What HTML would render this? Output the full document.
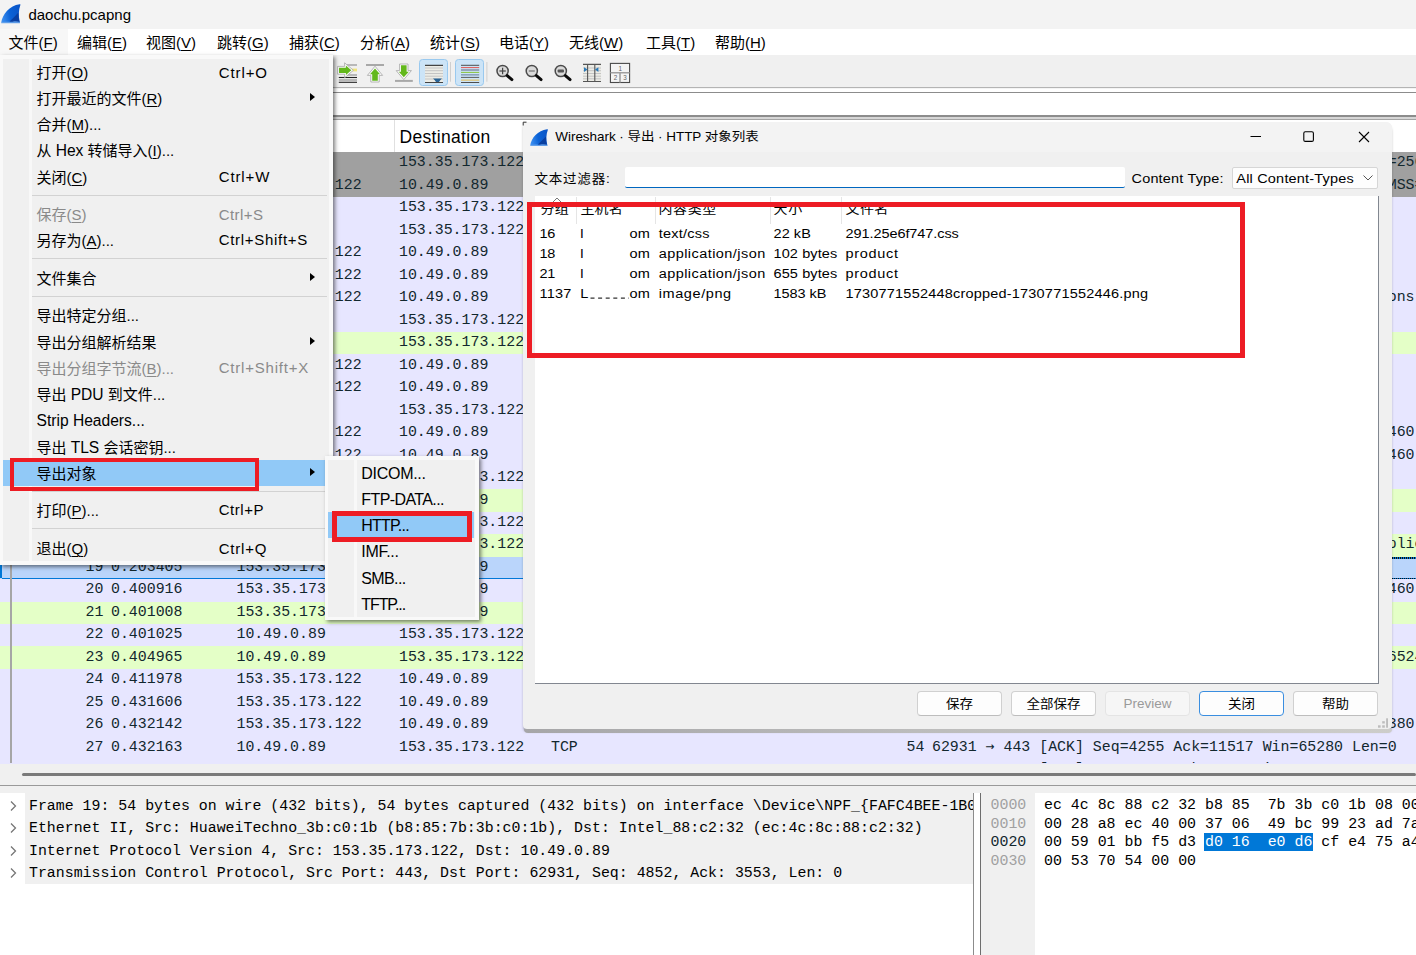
<!DOCTYPE html><html lang="zh-CN"><head><meta charset="utf-8"><title>daochu.pcapng</title><style>
*{box-sizing:border-box}
html,body{margin:0;padding:0}
body{width:1416px;height:955px;position:relative;overflow:hidden;background:#fff;font-family:"Liberation Sans","Noto Sans CJK SC",sans-serif;color:#000}
div,span,svg{position:absolute}
.t{white-space:pre;line-height:20px;height:20px}
.m{font-family:"Liberation Mono","Noto Sans CJK SC",monospace;font-size:14.900px;color:#12272e;white-space:pre;line-height:20px;height:20px}
.u{text-decoration:underline;position:static;text-underline-offset:2px}
u{text-underline-offset:2px;text-decoration-thickness:1px}
.mi{font-size:15px;left:36.5px}
.sc{font-size:16px;left:218.5px;letter-spacing:.4px}
.l{position:static;font-size:15.6px}
.ar{position:static;font-family:"DejaVu Sans Mono",monospace;font-size:14.85px;line-height:10px}
.bt{position:static;display:inline-block;transform:scaleY(.93)}
.dis{color:#8a8a8a}
.arr{width:0;height:0;border-left:5px solid #000;border-top:4.8px solid transparent;border-bottom:4.8px solid transparent}
.sep{height:1px;background:#d4d4d4}
.btn{border:1px solid #d0d0d0;border-bottom-color:#bdbdbd;border-radius:4px;background:#fdfdfd;height:25px;top:691px;font-size:13.5px;text-align:center;line-height:23px}
.red{border:5px solid #ed1c24}
</style></head><body>
<div style="left:0px;top:0px;width:1416px;height:29px;background:#f3f3f3;"></div>
<svg style="left:1px;top:4px" width="20" height="19.6" viewBox="0 0 20 20" preserveAspectRatio="none"><defs><linearGradient id="g1" x1="0" y1=".6" x2="1" y2=".4"><stop offset="0" stop-color="#3d8ff0"/><stop offset=".45" stop-color="#0b62d6"/><stop offset="1" stop-color="#0a55c8"/></linearGradient></defs><path d="M0.2 19.2C1.4 10.5 8.5 1.6 18.6 0.3C19.4 0.2 19.6 0.7 19.3 1.4C17.6 6 17.3 12 18.9 19.2Z" fill="url(#g1)"/><path d="M8.8 17.6C12 14.6 14.6 11.6 17.4 8.6C17.3 12 17.7 15.6 18.6 18.8L9 18.8Z" fill="#093a98" opacity=".85"/><path d="M0.2 19.2C4 17.2 8 18.8 11.5 18C14.5 17.3 17 17.8 18.9 18.4L18.9 19.7L0.2 19.7Z" fill="#5f9eea" opacity=".9"/></svg>
<span class="t" style="left:28.4px;top:4.50px;font-size:15px;">daochu.pcapng</span>
<div style="left:0px;top:29px;width:1416px;height:26px;background:#ffffff;"></div>
<div style="left:0px;top:29px;width:67.6px;height:26px;background:#f7f7f7;"></div>
<span class="t" style="left:8.5px;top:32.50px;font-size:15px;">文件(<u>F</u>)</span>
<span class="t" style="left:77px;top:32.50px;font-size:15px;">编辑(<u>E</u>)</span>
<span class="t" style="left:146px;top:32.50px;font-size:15px;">视图(<u>V</u>)</span>
<span class="t" style="left:217px;top:32.50px;font-size:15px;">跳转(<u>G</u>)</span>
<span class="t" style="left:289px;top:32.50px;font-size:15px;">捕获(<u>C</u>)</span>
<span class="t" style="left:360px;top:32.50px;font-size:15px;">分析(<u>A</u>)</span>
<span class="t" style="left:430px;top:32.50px;font-size:15px;">统计(<u>S</u>)</span>
<span class="t" style="left:499px;top:32.50px;font-size:15px;">电话(<u>Y</u>)</span>
<span class="t" style="left:569px;top:32.50px;font-size:15px;">无线(<u>W</u>)</span>
<span class="t" style="left:646px;top:32.50px;font-size:15px;">工具(<u>T</u>)</span>
<span class="t" style="left:715px;top:32.50px;font-size:15px;">帮助(<u>H</u>)</span>
<div style="left:0px;top:55px;width:1416px;height:33px;background:#f0f0f0;"></div>
<div style="left:0px;top:87px;width:1416px;height:1px;background:#b4b4b4;"></div>
<div style="left:0px;top:88px;width:1416px;height:1px;background:#f4f4f4;"></div>
<div style="left:0px;top:89px;width:1416px;height:3px;background:#ffffff;"></div>
<div style="left:0px;top:92px;width:1416px;height:1px;background:#8c8c8c;"></div>
<div style="left:0px;top:93px;width:1416px;height:22px;background:#ffffff;"></div>
<div style="left:0px;top:115px;width:1416px;height:2px;background:#8c8c8c;"></div>
<div style="left:0px;top:117px;width:1416px;height:1.5px;background:#d6d6d6;"></div>
<div style="left:0px;top:118.5px;width:1416px;height:1.2px;background:#a4a4a4;"></div>
<div style="left:0px;top:120px;width:1416px;height:32px;background:#ffffff;"></div>
<div style="left:394px;top:120px;width:1px;height:32px;background:#e0e0e0;"></div>
<span class="t" style="left:399.5px;top:126.50px;font-size:17.5px;letter-spacing:.32px;">Destination</span>
<div style="left:0;top:152px;width:1416px;height:612.2px;overflow:hidden;background:#e7e6ff">
<div style="left:0;top:-0.1px;width:1416px;height:23.080000000000002px;background:#a0a0a0">
<span class="m" style="left:94.56px;top:0.43px;">1</span>
<span class="m" style="left:236.50px;top:0.43px;">10.49.0.89</span>
<span class="m" style="left:399.00px;top:0.43px;">153.35.173.122</span>
<span class="m" style="left:551.00px;top:0.43px;">TCP</span>
<span class="m" style="left:906.62px;top:0.43px;">66</span>
<span class="m" style="left:932.00px;top:0.43px;">62931 <span class="ar">→</span> 443 [SYN] Seq=0 Win=64240 Len=0 MSS=1460 WS=256 SACK_PERM</span>
</div>
<div style="left:0;top:22.38px;width:1416px;height:23.080000000000002px;background:#a0a0a0">
<span class="m" style="left:94.56px;top:0.43px;">2</span>
<span class="m" style="left:236.50px;top:0.43px;">153.35.173.122</span>
<span class="m" style="left:399.00px;top:0.43px;">10.49.0.89</span>
<span class="m" style="left:551.00px;top:0.43px;">TCP</span>
<span class="m" style="left:906.62px;top:0.43px;">66</span>
<span class="m" style="left:932.00px;top:0.43px;">443 <span class="ar">→</span> 62931 [SYN, ACK] Seq=0 Ack=1 Win=64240 Len=0 MSS=1360 SACK_PERM WS=128</span>
</div>
<div style="left:0;top:44.86px;width:1416px;height:23.080000000000002px;background:#e7e6ff">
<span class="m" style="left:94.56px;top:0.43px;">3</span>
<span class="m" style="left:236.50px;top:0.43px;">10.49.0.89</span>
<span class="m" style="left:399.00px;top:0.43px;">153.35.173.122</span>
<span class="m" style="left:551.00px;top:0.43px;">TCP</span>
<span class="m" style="left:906.62px;top:0.43px;">54</span>
<span class="m" style="left:932.00px;top:0.43px;">62931 <span class="ar">→</span> 443 [ACK] Seq=1 Ack=1 Win=65280 Len=0</span>
</div>
<div style="left:0;top:67.34px;width:1416px;height:23.080000000000002px;background:#e7e6ff">
<span class="m" style="left:94.56px;top:0.43px;">4</span>
<span class="m" style="left:236.50px;top:0.43px;">10.49.0.89</span>
<span class="m" style="left:399.00px;top:0.43px;">153.35.173.122</span>
<span class="m" style="left:551.00px;top:0.43px;">TLSv1.3</span>
<span class="m" style="left:897.68px;top:0.43px;">571</span>
<span class="m" style="left:932.00px;top:0.43px;">Client Hello</span>
</div>
<div style="left:0;top:89.82000000000001px;width:1416px;height:23.080000000000002px;background:#e7e6ff">
<span class="m" style="left:94.56px;top:0.43px;">5</span>
<span class="m" style="left:236.50px;top:0.43px;">153.35.173.122</span>
<span class="m" style="left:399.00px;top:0.43px;">10.49.0.89</span>
<span class="m" style="left:551.00px;top:0.43px;">TCP</span>
<span class="m" style="left:906.62px;top:0.43px;">54</span>
<span class="m" style="left:932.00px;top:0.43px;">443 <span class="ar">→</span> 62931 [ACK] Seq=1 Ack=518 Win=64128 Len=0</span>
</div>
<div style="left:0;top:112.30000000000001px;width:1416px;height:23.080000000000002px;background:#e7e6ff">
<span class="m" style="left:94.56px;top:0.43px;">6</span>
<span class="m" style="left:236.50px;top:0.43px;">153.35.173.122</span>
<span class="m" style="left:399.00px;top:0.43px;">10.49.0.89</span>
<span class="m" style="left:551.00px;top:0.43px;">TLSv1.3</span>
<span class="m" style="left:888.74px;top:0.43px;">1414</span>
<span class="m" style="left:932.00px;top:0.43px;">Server Hello, Change Cipher Spec</span>
</div>
<div style="left:0;top:134.78px;width:1416px;height:23.080000000000002px;background:#e7e6ff">
<span class="m" style="left:94.56px;top:0.43px;">7</span>
<span class="m" style="left:236.50px;top:0.43px;">153.35.173.122</span>
<span class="m" style="left:399.00px;top:0.43px;">10.49.0.89</span>
<span class="m" style="left:551.00px;top:0.43px;">TLSv1.3</span>
<span class="m" style="left:888.74px;top:0.43px;">1414</span>
<span class="m" style="left:932.00px;top:0.43px;">Server Hello, Change Cipher Spec, Encrypted Extensions, Certificate</span>
</div>
<div style="left:0;top:157.26000000000002px;width:1416px;height:23.080000000000002px;background:#e7e6ff">
<span class="m" style="left:94.56px;top:0.43px;">8</span>
<span class="m" style="left:236.50px;top:0.43px;">10.49.0.89</span>
<span class="m" style="left:399.00px;top:0.43px;">153.35.173.122</span>
<span class="m" style="left:551.00px;top:0.43px;">TCP</span>
<span class="m" style="left:906.62px;top:0.43px;">54</span>
<span class="m" style="left:932.00px;top:0.43px;">62931 <span class="ar">→</span> 443 [ACK] Seq=518 Ack=2721 Win=65280 Len=0</span>
</div>
<div style="left:0;top:179.74px;width:1416px;height:23.080000000000002px;background:#e4ffc7">
<span class="m" style="left:94.56px;top:0.43px;">9</span>
<span class="m" style="left:236.50px;top:0.43px;">10.49.0.89</span>
<span class="m" style="left:399.00px;top:0.43px;">153.35.173.122</span>
<span class="m" style="left:551.00px;top:0.43px;">HTTP</span>
<span class="m" style="left:897.68px;top:0.43px;">571</span>
<span class="m" style="left:932.00px;top:0.43px;">GET /product HTTP/1.1</span>
</div>
<div style="left:0;top:202.22px;width:1416px;height:23.080000000000002px;background:#e7e6ff">
<span class="m" style="left:85.62px;top:0.43px;">10</span>
<span class="m" style="left:236.50px;top:0.43px;">153.35.173.122</span>
<span class="m" style="left:399.00px;top:0.43px;">10.49.0.89</span>
<span class="m" style="left:551.00px;top:0.43px;">TCP</span>
<span class="m" style="left:906.62px;top:0.43px;">54</span>
<span class="m" style="left:932.00px;top:0.43px;">443 <span class="ar">→</span> 62931 [ACK] Seq=2721 Ack=1035 Win=64128 Len=0</span>
</div>
<div style="left:0;top:224.70000000000002px;width:1416px;height:23.080000000000002px;background:#e7e6ff">
<span class="m" style="left:85.62px;top:0.43px;">11</span>
<span class="m" style="left:236.50px;top:0.43px;">153.35.173.122</span>
<span class="m" style="left:399.00px;top:0.43px;">10.49.0.89</span>
<span class="m" style="left:551.00px;top:0.43px;">TCP</span>
<span class="m" style="left:906.62px;top:0.43px;">54</span>
<span class="m" style="left:932.00px;top:0.43px;">443 <span class="ar">→</span> 62931 [ACK] Seq=2721 Ack=1552 Win=64128 Len=0</span>
</div>
<div style="left:0;top:247.18px;width:1416px;height:23.080000000000002px;background:#e7e6ff">
<span class="m" style="left:85.62px;top:0.43px;">12</span>
<span class="m" style="left:236.50px;top:0.43px;">10.49.0.89</span>
<span class="m" style="left:399.00px;top:0.43px;">153.35.173.122</span>
<span class="m" style="left:551.00px;top:0.43px;">TCP</span>
<span class="m" style="left:906.62px;top:0.43px;">54</span>
<span class="m" style="left:932.00px;top:0.43px;">62931 <span class="ar">→</span> 443 [ACK] Seq=1552 Ack=2721 Win=65280 Len=0</span>
</div>
<div style="left:0;top:269.65999999999997px;width:1416px;height:23.080000000000002px;background:#e7e6ff">
<span class="m" style="left:85.62px;top:0.43px;">13</span>
<span class="m" style="left:236.50px;top:0.43px;">153.35.173.122</span>
<span class="m" style="left:399.00px;top:0.43px;">10.49.0.89</span>
<span class="m" style="left:551.00px;top:0.43px;">TCP</span>
<span class="m" style="left:888.74px;top:0.43px;">1514</span>
<span class="m" style="left:932.00px;top:0.43px;">443 <span class="ar">→</span> 62931 [ACK] Seq=2721 Ack=1552 Win=64128 Len=1460</span>
</div>
<div style="left:0;top:292.14px;width:1416px;height:23.080000000000002px;background:#e7e6ff">
<span class="m" style="left:85.62px;top:0.43px;">14</span>
<span class="m" style="left:236.50px;top:0.43px;">153.35.173.122</span>
<span class="m" style="left:399.00px;top:0.43px;">10.49.0.89</span>
<span class="m" style="left:551.00px;top:0.43px;">TCP</span>
<span class="m" style="left:888.74px;top:0.43px;">1514</span>
<span class="m" style="left:932.00px;top:0.43px;">443 <span class="ar">→</span> 62931 [ACK] Seq=4181 Ack=1552 Win=64128 Len=1460</span>
</div>
<div style="left:0;top:314.62px;width:1416px;height:23.080000000000002px;background:#e7e6ff">
<span class="m" style="left:85.62px;top:0.43px;">15</span>
<span class="m" style="left:236.50px;top:0.43px;">10.49.0.89</span>
<span class="m" style="left:399.00px;top:0.43px;">153.35.173.122</span>
<span class="m" style="left:551.00px;top:0.43px;">TCP</span>
<span class="m" style="left:906.62px;top:0.43px;">54</span>
<span class="m" style="left:932.00px;top:0.43px;">62931 <span class="ar">→</span> 443 [ACK] Seq=1552 Ack=5641 Win=65280 Len=0</span>
</div>
<div style="left:0;top:337.09999999999997px;width:1416px;height:23.080000000000002px;background:#e4ffc7">
<span class="m" style="left:85.62px;top:0.43px;">16</span>
<span class="m" style="left:236.50px;top:0.43px;">153.35.173.122</span>
<span class="m" style="left:399.00px;top:0.43px;">10.49.0.89</span>
<span class="m" style="left:551.00px;top:0.43px;">HTTP</span>
<span class="m" style="left:897.68px;top:0.43px;">156</span>
<span class="m" style="left:932.00px;top:0.43px;">HTTP/1.1 200 OK  (text/css)</span>
</div>
<div style="left:0;top:359.58px;width:1416px;height:23.080000000000002px;background:#e7e6ff">
<span class="m" style="left:85.62px;top:0.43px;">17</span>
<span class="m" style="left:236.50px;top:0.43px;">10.49.0.89</span>
<span class="m" style="left:399.00px;top:0.43px;">153.35.173.122</span>
<span class="m" style="left:551.00px;top:0.43px;">TCP</span>
<span class="m" style="left:906.62px;top:0.43px;">54</span>
<span class="m" style="left:932.00px;top:0.43px;">62931 <span class="ar">→</span> 443 [ACK] Seq=1552 Ack=5743 Win=65280 Len=0</span>
</div>
<div style="left:0;top:382.06px;width:1416px;height:23.080000000000002px;background:#e4ffc7">
<span class="m" style="left:85.62px;top:0.43px;">18</span>
<span class="m" style="left:236.50px;top:0.43px;">10.49.0.89</span>
<span class="m" style="left:399.00px;top:0.43px;">153.35.173.122</span>
<span class="m" style="left:551.00px;top:0.43px;">HTTP</span>
<span class="m" style="left:897.68px;top:0.43px;">571</span>
<span class="m" style="left:932.00px;top:0.43px;">POST /product HTTP/1.1  (application/json) Applicatplication Data</span>
</div>
<div style="left:0;top:404.53999999999996px;width:1416px;height:23.080000000000002px;background:#bad5fb">
<span class="m" style="left:85.62px;top:0.43px;">19</span>
<span class="m" style="left:111.00px;top:0.43px;">0.203405</span>
<span class="m" style="left:236.50px;top:0.43px;">153.35.173.122</span>
<span class="m" style="left:399.00px;top:0.43px;">10.49.0.89</span>
<span class="m" style="left:551.00px;top:0.43px;">TCP</span>
<span class="m" style="left:906.62px;top:0.43px;">54</span>
<span class="m" style="left:932.00px;top:0.43px;">443 <span class="ar">→</span> 62931 [ACK] Seq=4852 Ack=3553 Win=64128 Len=0</span>
</div>
<div style="left:0;top:427.02px;width:1416px;height:23.080000000000002px;background:#e7e6ff">
<span class="m" style="left:85.62px;top:0.43px;">20</span>
<span class="m" style="left:111.00px;top:0.43px;">0.400916</span>
<span class="m" style="left:236.50px;top:0.43px;">153.35.173.122</span>
<span class="m" style="left:399.00px;top:0.43px;">10.49.0.89</span>
<span class="m" style="left:551.00px;top:0.43px;">TCP</span>
<span class="m" style="left:888.74px;top:0.43px;">1514</span>
<span class="m" style="left:932.00px;top:0.43px;">443 <span class="ar">→</span> 62931 [ACK] Seq=4852 Ack=3553 Win=64128 Len=1460</span>
</div>
<div style="left:0;top:449.5px;width:1416px;height:23.080000000000002px;background:#e4ffc7">
<span class="m" style="left:85.62px;top:0.43px;">21</span>
<span class="m" style="left:111.00px;top:0.43px;">0.401008</span>
<span class="m" style="left:236.50px;top:0.43px;">153.35.173.122</span>
<span class="m" style="left:399.00px;top:0.43px;">10.49.0.89</span>
<span class="m" style="left:551.00px;top:0.43px;">HTTP</span>
<span class="m" style="left:897.68px;top:0.43px;">709</span>
<span class="m" style="left:932.00px;top:0.43px;">HTTP/1.1 200 OK  (application/json)</span>
</div>
<div style="left:0;top:471.97999999999996px;width:1416px;height:23.080000000000002px;background:#e7e6ff">
<span class="m" style="left:85.62px;top:0.43px;">22</span>
<span class="m" style="left:111.00px;top:0.43px;">0.401025</span>
<span class="m" style="left:236.50px;top:0.43px;">10.49.0.89</span>
<span class="m" style="left:399.00px;top:0.43px;">153.35.173.122</span>
<span class="m" style="left:551.00px;top:0.43px;">TCP</span>
<span class="m" style="left:906.62px;top:0.43px;">54</span>
<span class="m" style="left:932.00px;top:0.43px;">62931 <span class="ar">→</span> 443 [ACK] Seq=3553 Ack=6967 Win=65280 Len=0</span>
</div>
<div style="left:0;top:494.46px;width:1416px;height:23.080000000000002px;background:#e4ffc7">
<span class="m" style="left:85.62px;top:0.43px;">23</span>
<span class="m" style="left:111.00px;top:0.43px;">0.404965</span>
<span class="m" style="left:236.50px;top:0.43px;">10.49.0.89</span>
<span class="m" style="left:399.00px;top:0.43px;">153.35.173.122</span>
<span class="m" style="left:551.00px;top:0.43px;">HTTP</span>
<span class="m" style="left:897.68px;top:0.43px;">702</span>
<span class="m" style="left:932.00px;top:0.43px;">POST /product HTTP/1.1  (application/json) Len=65246524</span>
</div>
<div style="left:0;top:516.9399999999999px;width:1416px;height:23.080000000000002px;background:#e7e6ff">
<span class="m" style="left:85.62px;top:0.43px;">24</span>
<span class="m" style="left:111.00px;top:0.43px;">0.411978</span>
<span class="m" style="left:236.50px;top:0.43px;">153.35.173.122</span>
<span class="m" style="left:399.00px;top:0.43px;">10.49.0.89</span>
<span class="m" style="left:551.00px;top:0.43px;">TCP</span>
<span class="m" style="left:906.62px;top:0.43px;">54</span>
<span class="m" style="left:932.00px;top:0.43px;">443 <span class="ar">→</span> 62931 [ACK] Seq=6967 Ack=4201 Win=64128 Len=0</span>
</div>
<div style="left:0;top:539.42px;width:1416px;height:23.080000000000002px;background:#e7e6ff">
<span class="m" style="left:85.62px;top:0.43px;">25</span>
<span class="m" style="left:111.00px;top:0.43px;">0.431606</span>
<span class="m" style="left:236.50px;top:0.43px;">153.35.173.122</span>
<span class="m" style="left:399.00px;top:0.43px;">10.49.0.89</span>
<span class="m" style="left:551.00px;top:0.43px;">TCP</span>
<span class="m" style="left:906.62px;top:0.43px;">54</span>
<span class="m" style="left:932.00px;top:0.43px;">443 <span class="ar">→</span> 62931 [ACK] Seq=6967 Ack=4255 Win=64128 Len=0</span>
</div>
<div style="left:0;top:561.9px;width:1416px;height:23.080000000000002px;background:#e7e6ff">
<span class="m" style="left:85.62px;top:0.43px;">26</span>
<span class="m" style="left:111.00px;top:0.43px;">0.432142</span>
<span class="m" style="left:236.50px;top:0.43px;">153.35.173.122</span>
<span class="m" style="left:399.00px;top:0.43px;">10.49.0.89</span>
<span class="m" style="left:551.00px;top:0.43px;">TCP</span>
<span class="m" style="left:888.74px;top:0.43px;">1434</span>
<span class="m" style="left:932.00px;top:0.43px;">443 <span class="ar">→</span> 62931 [ACK] Seq=6967 Ack=4255 Win=64128 Len=1380</span>
</div>
<div style="left:0;top:584.38px;width:1416px;height:23.080000000000002px;background:#e7e6ff">
<span class="m" style="left:85.62px;top:0.43px;">27</span>
<span class="m" style="left:111.00px;top:0.43px;">0.432163</span>
<span class="m" style="left:236.50px;top:0.43px;">10.49.0.89</span>
<span class="m" style="left:399.00px;top:0.43px;">153.35.173.122</span>
<span class="m" style="left:551.00px;top:0.43px;">TCP</span>
<span class="m" style="left:906.62px;top:0.43px;">54</span>
<span class="m" style="left:932.00px;top:0.43px;">62931 <span class="ar">→</span> 443 [ACK] Seq=4255 Ack=11517 Win=65280 Len=0</span>
</div>
<div style="left:0;top:606.86px;width:1416px;height:23.080000000000002px;background:#e7e6ff">
<span class="m" style="left:85.62px;top:0.43px;">28</span>
<span class="m" style="left:111.00px;top:0.43px;">0.432410</span>
<span class="m" style="left:236.50px;top:0.43px;">153.35.173.122</span>
<span class="m" style="left:399.00px;top:0.43px;">10.49.0.89</span>
<span class="m" style="left:551.00px;top:0.43px;">TCP</span>
<span class="m" style="left:888.74px;top:0.43px;">1434</span>
<span class="m" style="left:932.00px;top:0.43px;">443 <span class="ar">→</span> 62931 [ACK] Seq=8347 Ack=4255 Win=64128 Len=1380</span>
</div>
<div style="left:1392px;top:405.4px;width:24px;height:1.2px;background:#0078d7"></div>
<div style="left:2px;top:425.79999999999995px;width:1414px;height:1.3px;background:#0078d7"></div>
<div style="left:1392px;top:405.4px;width:24px;height:1.2px;background:repeating-linear-gradient(90deg,#111 0 1px,transparent 1px 2px)"></div>
<div style="left:1392px;top:425.79999999999995px;width:24px;height:1.3px;background:repeating-linear-gradient(90deg,#111 0 1px,transparent 1px 2px)"></div>
<div style="left:0;top:405px;width:2px;height:20.8px;background:#0078d7"></div>
<div style="left:10px;top:0;width:2px;height:612px;background:#a6a6a6"></div>
</div>
<div style="left:0px;top:763.3px;width:1416px;height:1px;background:#e7e6ff;"></div>
<div style="left:0px;top:764px;width:1416px;height:29px;background:#f0f0f0;"></div>
<div style="left:22px;top:773px;width:1394px;height:3px;background:#7a7a7a;border-radius:1.5px;"></div>
<div style="left:0px;top:785px;width:1416px;height:1px;background:#9a9a9a;"></div>
<div style="left:0px;top:793px;width:973px;height:162px;background:#ffffff;"></div>
<div style="left:25px;top:793px;width:948px;height:91px;background:#f0f0f0;"></div>
<div style="left:0;top:793px;width:973px;height:162px;overflow:hidden">
<svg style="left:9px;top:6.800000000000001px" width="9" height="12" viewBox="0 0 9 12"><path d="M2 1.5 L6.5 6 L2 10.5" fill="none" stroke="#757575" stroke-width="1.25"/></svg>
<span class="m" style="left:29px;top:2.8000000000000007px;color:#000">Frame 19: 54 bytes on wire (432 bits), 54 bytes captured (432 bits) on interface \Device\NPF_{FAFC4BEE-1B08-4A5C-9F0E-2F0D6B7A9A51}, id 0</span>
<svg style="left:9px;top:29.299999999999997px" width="9" height="12" viewBox="0 0 9 12"><path d="M2 1.5 L6.5 6 L2 10.5" fill="none" stroke="#757575" stroke-width="1.25"/></svg>
<span class="m" style="left:29px;top:25.299999999999997px;color:#000">Ethernet II, Src: HuaweiTechno_3b:c0:1b (b8:85:7b:3b:c0:1b), Dst: Intel_88:c2:32 (ec:4c:8c:88:c2:32)</span>
<svg style="left:9px;top:51.8px" width="9" height="12" viewBox="0 0 9 12"><path d="M2 1.5 L6.5 6 L2 10.5" fill="none" stroke="#757575" stroke-width="1.25"/></svg>
<span class="m" style="left:29px;top:47.8px;color:#000">Internet Protocol Version 4, Src: 153.35.173.122, Dst: 10.49.0.89</span>
<svg style="left:9px;top:74.3px" width="9" height="12" viewBox="0 0 9 12"><path d="M2 1.5 L6.5 6 L2 10.5" fill="none" stroke="#757575" stroke-width="1.25"/></svg>
<span class="m" style="left:29px;top:70.3px;color:#000">Transmission Control Protocol, Src Port: 443, Dst Port: 62931, Seq: 4852, Ack: 3553, Len: 0</span>
</div>
<div style="left:973px;top:793px;width:1px;height:162px;background:#8c8c8c;"></div>
<div style="left:980px;top:793px;width:1px;height:162px;background:#6e6e6e;"></div>
<div style="left:981px;top:793px;width:435px;height:162px;background:#ffffff;"></div>
<div style="left:981px;top:793px;width:54px;height:162px;background:#f0f0f0;"></div>
<div style="left:981px;top:793px;width:435px;height:162px;overflow:hidden">
<span class="m" style="left:9.5px;top:2.10px;color:#a0a0a0;font-size:14.917px">0000</span>
<span class="m" style="left:63px;top:2.10px;color:#000;font-size:14.917px">ec 4c 8c 88 c2 32 b8 85  7b 3b c0 1b 08 00 45 00</span>
<span class="m" style="left:9.5px;top:20.65px;color:#a0a0a0;font-size:14.917px">0010</span>
<span class="m" style="left:63px;top:20.65px;color:#000;font-size:14.917px">00 28 a8 ec 40 00 37 06  49 bc 99 23 ad 7a 0a 31</span>
<span class="m" style="left:9.5px;top:39.20px;color:#12272e;font-size:14.917px">0020</span>
<div style="left:223.10px;top:39.90px;width:109.40px;height:18.6px;background:#0078d7"></div>
<span class="m" style="left:63px;top:39.20px;color:#000;font-size:14.917px">00 59 01 bb f5 d3 <span style="position:static;color:#fff">d0 16  e0 d6</span> cf e4 75 a4 50 10</span>
<span class="m" style="left:9.5px;top:57.75px;color:#a0a0a0;font-size:14.917px">0030</span>
<span class="m" style="left:63px;top:57.75px;color:#000;font-size:14.917px">00 53 70 54 00 00</span>
</div>
<div style="left:419px;top:59px;width:29px;height:26.6px;background:#cce4f7;border:1px solid #99c9ef;border-radius:3.5px;"></div>
<div style="left:455px;top:59px;width:29px;height:26.6px;background:#cce4f7;border:1px solid #99c9ef;border-radius:3.5px;"></div>
<svg style="left:335px;top:56px" width="305" height="32" viewBox="335 56 305 32">
<g stroke-width="1.1">
 <path d="M346.7 65H357" stroke="#8a8a8a"/>
 <path d="M347 75H357" stroke="#8a8a8a"/>
 <path d="M338.8 77.5H357" stroke="#222"/>
 <path d="M338.8 80H357" stroke="#8a8a8a"/>
 <path d="M338.8 82.3H357" stroke="#222"/>
</g>
<rect x="351.5" y="68.6" width="5.5" height="2.8" fill="#efe47a"/>
<path d="M337.6 66.4H344.6V62.8L353.4 70.3L344.6 77.8V74.2H337.6Z" fill="#fbfbfb" stroke="#a6a6a6" stroke-width=".8"/>
<path d="M339 67.7H345.9V65.5L351.3 70.3L345.9 75.1V72.9H339Z" fill="#63b81c"/>
<path d="M366 65H384" stroke="#a8a8a8" stroke-width="2"/>
<path d="M375 66.2L382.6 75.4H379.2V82H370.8V75.4H367.4Z" fill="#fbfbfb" stroke="#a6a6a6" stroke-width=".8"/>
<path d="M375 68.6L380 74.3H377.8V80.8H372.2V74.3H370Z" fill="#63b81c"/>
<path d="M403.8 79.6L396.2 70.6H399.6V64H408V70.6H411.4Z" fill="#fbfbfb" stroke="#a6a6a6" stroke-width=".8"/>
<path d="M403.8 77.2L398.8 71.8H401V65.2H406.6V71.8H408.8Z" fill="#63b81c"/>
<path d="M395 80.9H412.8" stroke="#a8a8a8" stroke-width="2"/>
<rect x="425" y="65.5" width="18" height="17" fill="#ecece6"/>
<g stroke="#c4c4c4" stroke-width="1"><path d="M425 68H443M425 70.7H443M425 73.5H443M425 76.2H443M425 79H443"/></g>
<path d="M425 65.3H443M425 82.5H443" stroke="#444" stroke-width="1.2"/>
<path d="M433 78.4H442L440.2 80.2L439 82H436L434.8 80.2Z" fill="#2a6496"/>
<path d="M450.5 62V81.7M486.9 62V81.7" stroke="#cfcfcf" stroke-width="1"/>
<g stroke-width=".95">
 <path d="M461 65.3H479.2" stroke="#444"/><path d="M461 67.6H479.2" stroke="#e0514b"/><path d="M461 70H479.2" stroke="#5a607a"/>
 <path d="M461 72.4H479.2" stroke="#86c232"/><path d="M461 74.9H479.2" stroke="#5f7390"/><path d="M461 77.4H479.2" stroke="#555"/>
 <path d="M461 80.1H479.2" stroke="#e8b844"/><path d="M461 82.5H479.2" stroke="#444"/>
</g>
<circle cx="502.6" cy="71" r="5.6" fill="#d9d9d9" stroke="#4a4a4a" stroke-width="1.5"/><path d="M507.20000000000005 75.6L511.90000000000003 79.6" stroke="#0a0a0a" stroke-width="3" stroke-linecap="round"/><path d="M502.6 67.8V74.2" stroke="#444" stroke-width="1.2"/><path d="M499.4 71H505.8" stroke="#444" stroke-width="1.2"/>
<circle cx="531.8" cy="71" r="5.6" fill="#d9d9d9" stroke="#4a4a4a" stroke-width="1.5"/><path d="M536.4 75.6L541.0999999999999 79.6" stroke="#0a0a0a" stroke-width="3" stroke-linecap="round"/><path d="M528.8 71H534.8" stroke="#777" stroke-width="1.3"/>
<circle cx="560.8" cy="71" r="5.6" fill="#d9d9d9" stroke="#4a4a4a" stroke-width="1.5"/><path d="M565.4 75.6L570.0999999999999 79.6" stroke="#0a0a0a" stroke-width="3" stroke-linecap="round"/><rect x="557.6" y="69.6" width="6.4" height="2.8" rx="1" fill="#555"/>
<rect x="583" y="65" width="18" height="16" fill="#ecece6"/>
<g stroke="#c4c4c4" stroke-width="1"><path d="M583 68H601M583 70.7H601M583 73.5H601M583 76.2H601M583 78.8H601"/></g>
<path d="M583 64.4H601M583 81.5H601" stroke="#555" stroke-width="1.1"/>
<path d="M587.6 64.4V81.5M594.8 64.4V81.5" stroke="#555" stroke-width="1.1"/>
<path d="M584 67.2L587.4 69.6L584 72Z M598.4 67.2L595 69.6L598.4 72Z" fill="#2a7ab8"/>
<rect x="610.4" y="63.4" width="19.2" height="19.1" fill="#f4f4f4" stroke="#4a4a4a" stroke-width="1.1"/>
<path d="M610.4 72.7H629.6M620 72.7V82.5" stroke="#a0a0a0" stroke-width="1.6"/>
<g font-family="Liberation Sans,sans-serif" font-size="6.3" fill="#666" text-anchor="middle"><text x="620.2" y="70.6">1</text><text x="615.4" y="80.2">2</text><text x="625" y="80.2">3</text></g>
</svg>
<div style="left:523px;top:122px;width:869px;height:607px;background:#f0f0f0;border-radius:2px 6px 4px 4px;box-shadow:0 3px 3px -1px rgba(0,0,0,.5)">
<div style="left:1px;top:606.6px;width:868px;height:4.1px;border-radius:0 0 4px 4px;background:linear-gradient(90deg,#a6a6a8,#bcbcbc 45%,#cdcdca)"></div>
<div style="left:0;top:0;width:869px;height:30px;background:#f3f3f3;border-radius:2px 6px 0 0"></div>
</div>
<svg style="left:530.2px;top:128.6px" width="18.4" height="17.2" viewBox="0 0 20 20" preserveAspectRatio="none"><defs><linearGradient id="g530" x1="0" y1=".6" x2="1" y2=".4"><stop offset="0" stop-color="#3d8ff0"/><stop offset=".45" stop-color="#0b62d6"/><stop offset="1" stop-color="#0a55c8"/></linearGradient></defs><path d="M0.2 19.2C1.4 10.5 8.5 1.6 18.6 0.3C19.4 0.2 19.6 0.7 19.3 1.4C17.6 6 17.3 12 18.9 19.2Z" fill="url(#g530)"/><path d="M8.8 17.6C12 14.6 14.6 11.6 17.4 8.6C17.3 12 17.7 15.6 18.6 18.8L9 18.8Z" fill="#093a98" opacity=".85"/><path d="M0.2 19.2C4 17.2 8 18.8 11.5 18C14.5 17.3 17 17.8 18.9 18.4L18.9 19.7L0.2 19.7Z" fill="#5f9eea" opacity=".9"/></svg>
<svg style="left:522px;top:121px" width="5" height="5" viewBox="0 0 5 5"><path d="M1.2 4.5V1.2H4.5" fill="none" stroke="#333" stroke-width="1"/></svg>
<span class="t" style="left:555.3px;top:126.70px;font-size:13.5px;letter-spacing:-0.047px;transform:scaleY(.9);">Wireshark · 导出 · HTTP 对象列表</span>
<svg style="left:1249px;top:130px" width="14" height="14" viewBox="0 0 14 14"><path d="M1.5 6.5H12" stroke="#000" stroke-width="1"/></svg>
<svg style="left:1303px;top:131px" width="12" height="12" viewBox="0 0 12 12"><rect x=".8" y=".8" width="9.6" height="9.6" rx="1.5" fill="none" stroke="#000" stroke-width="1.1"/></svg>
<svg style="left:1358px;top:131px" width="12" height="12" viewBox="0 0 12 12"><path d="M1 1L11 11M11 1L1 11" stroke="#000" stroke-width="1.1"/></svg>
<span class="t" style="left:534.5px;top:168.70px;font-size:13.5px;letter-spacing:0.789px;transform:scaleY(.95);">文本过滤器:</span>
<div style="left:625px;top:167px;width:500px;height:21px;background:#ffffff;border-bottom:1.5px solid #0067c0;border-radius:2px;"></div>
<span class="t" style="left:1131.5px;top:168.30px;font-size:14.5px;letter-spacing:0.175px;transform:scaleY(.9);">Content Type:</span>
<div style="left:1232px;top:167px;width:146px;height:22px;background:#fdfdfd;border:1px solid #d6d6d6;border-radius:2px;"></div>
<span class="t" style="left:1236.3px;top:168.30px;font-size:14.5px;letter-spacing:0.191px;transform:scaleY(.9);">All Content-Types</span>
<svg style="left:1362px;top:174px" width="12" height="8" viewBox="0 0 12 8"><path d="M1.5 1.5L6 6L10.5 1.5" fill="none" stroke="#555" stroke-width="1"/></svg>
<div style="left:535px;top:196px;width:844px;height:488px;background:#ffffff;border-right:1px solid #828790;border-bottom:1px solid #828790;"></div>
<div style="left:575.8px;top:197px;width:1px;height:27px;background:#e5e5e5;"></div>
<div style="left:654.8px;top:197px;width:1px;height:27px;background:#e5e5e5;"></div>
<div style="left:769.5px;top:197px;width:1px;height:27px;background:#e5e5e5;"></div>
<div style="left:841px;top:197px;width:1px;height:27px;background:#e5e5e5;"></div>
<svg style="left:551px;top:197px" width="12" height="7" viewBox="0 0 12 7"><path d="M1 6L6 1L11 6" fill="none" stroke="#777" stroke-width="1"/></svg>
<span class="t" style="left:540.5px;top:199.60px;font-size:14px;letter-spacing:0.150px;transform:scaleY(.86);">分组</span>
<span class="t" style="left:580.5px;top:199.60px;font-size:14px;letter-spacing:0.100px;transform:scaleY(.86);">主机名</span>
<span class="t" style="left:658.5px;top:199.60px;font-size:14px;letter-spacing:0.575px;transform:scaleY(.86);">内容类型</span>
<span class="t" style="left:773.5px;top:199.60px;font-size:14px;letter-spacing:0.650px;transform:scaleY(.86);">大小</span>
<span class="t" style="left:845.5px;top:199.60px;font-size:14px;letter-spacing:0.433px;transform:scaleY(.86);">文件名</span>
<span class="t" style="left:539.6px;top:223.40px;font-size:14.5px;letter-spacing:-0.320px;transform:scaleY(.9);">16</span>
<span class="t" style="left:580.3px;top:223.40px;font-size:14.5px;transform:scaleY(.9);">l</span>
<span class="t" style="left:629.5px;top:223.40px;font-size:14.5px;letter-spacing:0.172px;transform:scaleY(.9);">om</span>
<span class="t" style="left:658.7px;top:223.40px;font-size:14.5px;letter-spacing:0.230px;transform:scaleY(.9);">text/css</span>
<span class="t" style="left:773.5px;top:223.40px;font-size:14.5px;letter-spacing:0.061px;transform:scaleY(.9);">22 kB</span>
<span class="t" style="left:845.5px;top:223.40px;font-size:14.5px;letter-spacing:-0.074px;transform:scaleY(.9);">291.25e6f747.css</span>
<span class="t" style="left:539.6px;top:243.43px;font-size:14.5px;letter-spacing:-0.320px;transform:scaleY(.9);">18</span>
<span class="t" style="left:580.3px;top:243.43px;font-size:14.5px;transform:scaleY(.9);">l</span>
<span class="t" style="left:629.5px;top:243.43px;font-size:14.5px;letter-spacing:0.172px;transform:scaleY(.9);">om</span>
<span class="t" style="left:658.7px;top:243.43px;font-size:14.5px;letter-spacing:0.439px;transform:scaleY(.9);">application/json</span>
<span class="t" style="left:773.5px;top:243.43px;font-size:14.5px;letter-spacing:0.112px;transform:scaleY(.9);">102 bytes</span>
<span class="t" style="left:845.5px;top:243.43px;font-size:14.5px;letter-spacing:0.704px;transform:scaleY(.9);">product</span>
<span class="t" style="left:539.6px;top:263.46px;font-size:14.5px;letter-spacing:-0.320px;transform:scaleY(.9);">21</span>
<span class="t" style="left:580.3px;top:263.46px;font-size:14.5px;transform:scaleY(.9);">l</span>
<span class="t" style="left:629.5px;top:263.46px;font-size:14.5px;letter-spacing:0.172px;transform:scaleY(.9);">om</span>
<span class="t" style="left:658.7px;top:263.46px;font-size:14.5px;letter-spacing:0.439px;transform:scaleY(.9);">application/json</span>
<span class="t" style="left:773.5px;top:263.46px;font-size:14.5px;letter-spacing:0.112px;transform:scaleY(.9);">655 bytes</span>
<span class="t" style="left:845.5px;top:263.46px;font-size:14.5px;letter-spacing:0.704px;transform:scaleY(.9);">product</span>
<span class="t" style="left:539.6px;top:283.49px;font-size:14.5px;letter-spacing:0.153px;transform:scaleY(.9);">1137</span>
<span class="t" style="left:580.3px;top:283.49px;font-size:14.5px;transform:scaleY(.9);">L</span>
<span class="t" style="left:629.5px;top:283.49px;font-size:14.5px;letter-spacing:0.172px;transform:scaleY(.9);">om</span>
<span class="t" style="left:658.7px;top:283.49px;font-size:14.5px;letter-spacing:0.598px;transform:scaleY(.9);">image/png</span>
<span class="t" style="left:773.5px;top:283.49px;font-size:14.5px;letter-spacing:-0.060px;transform:scaleY(.9);">1583 kB</span>
<span class="t" style="left:845.5px;top:283.49px;font-size:14.5px;letter-spacing:0.202px;transform:scaleY(.9);">1730771552448cropped-1730771552446.png</span>
<svg style="left:589px;top:296px" width="42" height="4" viewBox="0 0 42 4"><path d="M1.5 2.2H40" stroke="#333" stroke-width="1.2" stroke-dasharray="4 3.6"/></svg>
<div class="btn" style="left:917px;width:85px;"><span class="bt">保存</span></div>
<div class="btn" style="left:1011px;width:85px;"><span class="bt">全部保存</span></div>
<div class="btn" style="left:1105px;width:85px;color:#9a9a9a;border-color:#e4e4e4;background:#f6f6f6;"><span class="bt">Preview</span></div>
<div class="btn" style="left:1199px;width:85px;border:1.5px solid #3a8ee0;"><span class="bt">关闭</span></div>
<div class="btn" style="left:1293px;width:85px;"><span class="bt">帮助</span></div>
<svg style="left:1377px;top:717px" width="12" height="12" viewBox="0 0 12 12"><g fill="#bdbdbd"><rect x="9.1" y="1.3" width="1.9" height="9.4"/><rect x="5.2" y="4.2" width="2.6" height="2.3"/><rect x="5.2" y="8.3" width="2.6" height="2.4"/><rect x="1" y="8.3" width="2.6" height="2.4"/></g></svg>
<div style="left:0;top:55.2px;width:333px;height:509.5px;background:#f9f9f9;box-shadow:2px 2px 4px rgba(0,0,0,.5)"></div>
<div style="left:2.8px;top:59px;width:326.2px;height:502px;background:#f0f0f0;"></div>
<div style="left:28.8px;top:59px;width:3.2px;height:502px;background:#f8f8f8;"></div>
<span class="t mi " style="top:63.30px">打开(<u>O</u>)</span>
<span class="t" style="left:218.7px;top:62.50px;font-size:15px;letter-spacing:0.906px;">Ctrl+O</span>
<span class="t mi " style="top:88.90px">打开最近的文件(<u>R</u>)</span>
<div class="arr" style="left:310px;top:92.90px"></div>
<span class="t mi " style="top:114.90px">合并(<u>M</u>)...</span>
<span class="t mi " style="top:141.20px">从 <span class="l">Hex</span> 转储导入(<u>I</u>)...</span>
<span class="t mi " style="top:167.90px">关闭(<u>C</u>)</span>
<span class="t" style="left:218.7px;top:167.10px;font-size:15px;letter-spacing:0.892px;">Ctrl+W</span>
<div style="left:32px;top:194.7px;width:295px;height:1px;background:#d2d2d2;"></div>
<span class="t mi dis" style="top:205.40px">保存(<u>S</u>)</span>
<span class="t" style="left:218.7px;top:204.60px;font-size:15px;letter-spacing:0.451px;color:#8a8a8a;">Ctrl+S</span>
<span class="t mi " style="top:231.20px">另存为(<u>A</u>)...</span>
<span class="t" style="left:218.7px;top:230.40px;font-size:15px;letter-spacing:0.702px;">Ctrl+Shift+S</span>
<div style="left:32px;top:257.8px;width:295px;height:1px;background:#d2d2d2;"></div>
<span class="t mi " style="top:269.40px">文件集合</span>
<div class="arr" style="left:310px;top:273.40px"></div>
<div style="left:32px;top:295.7px;width:295px;height:1px;background:#d2d2d2;"></div>
<span class="t mi " style="top:306.20px">导出特定分组...</span>
<span class="t mi " style="top:332.60px">导出分组解析结果</span>
<div class="arr" style="left:310px;top:336.60px"></div>
<span class="t mi dis" style="top:358.90px">导出分组字节流(<u>B</u>)...</span>
<span class="t" style="left:218.7px;top:358.10px;font-size:15px;letter-spacing:0.802px;color:#8a8a8a;">Ctrl+Shift+X</span>
<span class="t mi " style="top:385.00px">导出 <span class="l">PDU</span> 到文件...</span>
<span class="t mi " style="top:411.40px"><span class="l">Strip Headers...</span></span>
<span class="t mi " style="top:437.90px">导出 <span class="l">TLS</span> 会话密钥...</span>
<div style="left:2.8px;top:460px;width:326.2px;height:25.7px;background:#91c9f7;"></div>
<span class="t mi " style="top:463.80px">导出对象</span>
<div class="arr" style="left:310px;top:467.80px"></div>
<div style="left:32px;top:491.0px;width:295px;height:1px;background:#d2d2d2;"></div>
<span class="t mi " style="top:500.80px">打印(<u>P</u>)...</span>
<span class="t" style="left:218.7px;top:500.00px;font-size:15px;letter-spacing:0.534px;">Ctrl+P</span>
<div style="left:32px;top:528.0px;width:295px;height:1px;background:#d2d2d2;"></div>
<span class="t mi " style="top:539.30px">退出(<u>Q</u>)</span>
<span class="t" style="left:218.7px;top:538.50px;font-size:15px;letter-spacing:0.789px;">Ctrl+Q</span>
<div style="left:324.6px;top:456.3px;width:154.3px;height:164.1px;background:#f9f9f9;box-shadow:2px 2px 4px rgba(0,0,0,.5)"></div>
<div style="left:328px;top:460px;width:147px;height:156.6px;background:#f0f0f0;"></div>
<div style="left:354px;top:460px;width:3px;height:156.6px;background:#f8f8f8;"></div>
<span class="t" style="left:361.3px;top:463.50px;font-size:16px;letter-spacing:-0.284px;">DICOM...</span>
<span class="t" style="left:361.3px;top:489.80px;font-size:16px;letter-spacing:-0.599px;">FTP-DATA...</span>
<div style="left:328px;top:512.4px;width:146px;height:25.2px;background:#91c9f7;"></div>
<span class="t" style="left:361.3px;top:516.10px;font-size:16px;letter-spacing:-0.792px;">HTTP...</span>
<span class="t" style="left:361.3px;top:542.40px;font-size:16px;letter-spacing:-0.302px;">IMF...</span>
<span class="t" style="left:361.3px;top:568.70px;font-size:16px;letter-spacing:-0.619px;">SMB...</span>
<span class="t" style="left:361.3px;top:595.00px;font-size:16px;letter-spacing:-1.081px;">TFTP...</span>
<div style="left:10px;top:458px;width:248.5px;height:32.5px;border:4.6px solid #ed1c24"></div>
<div style="left:332px;top:511px;width:139.5px;height:31px;border:5px solid #ed1c24"></div>
<div style="left:527px;top:202px;width:718px;height:156px;border:5px solid #ed1c24"></div>
</body></html>
